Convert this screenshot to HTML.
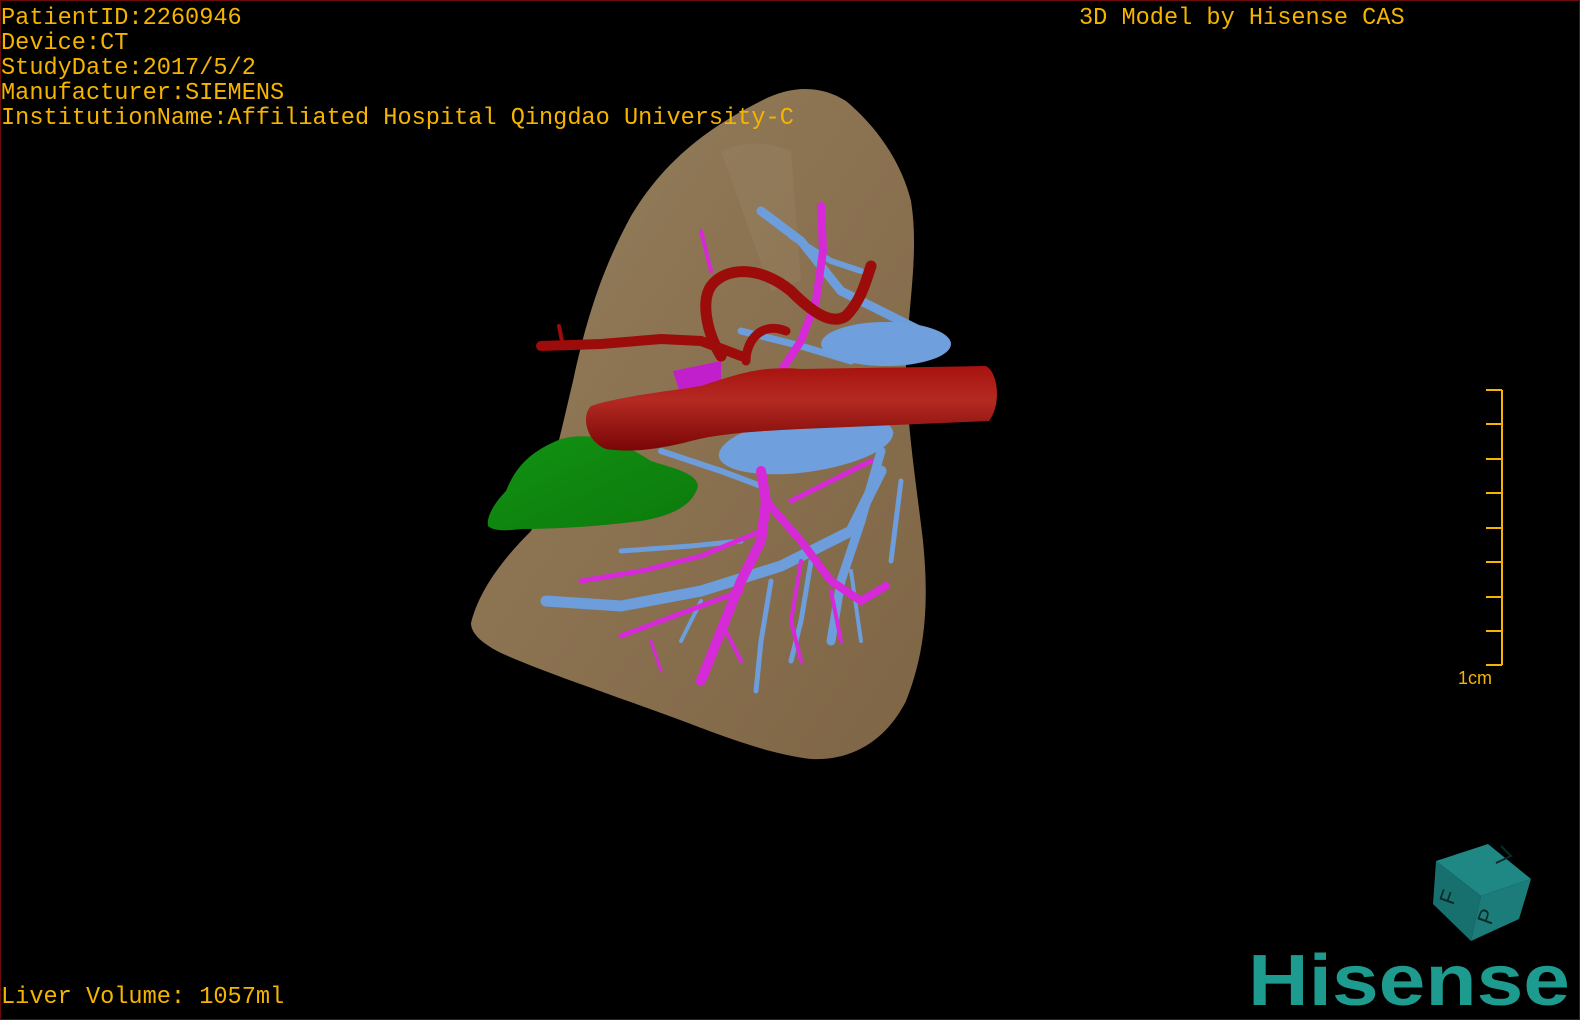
<!DOCTYPE html>
<html><head><meta charset="utf-8"><style>
html,body{margin:0;padding:0;background:#000;}
#c{position:relative;width:1580px;height:1020px;background:#000;overflow:hidden;box-sizing:border-box;border:1px solid #6a0a0a;}
.t{position:absolute;font-family:"Liberation Mono",monospace;font-size:23.6px;color:#f5b400;white-space:pre;line-height:25px;}
</style></head><body><div id="c">
<svg width="1580" height="1020" style="position:absolute;left:0;top:0">
<defs>
<linearGradient id="lv" x1="0" y1="0" x2="1" y2="1">
<stop offset="0" stop-color="#95805e"/><stop offset="0.5" stop-color="#8a7150"/><stop offset="1" stop-color="#7e6545"/>
</linearGradient>
<linearGradient id="rd" x1="0" y1="0" x2="0" y2="1">
<stop offset="0" stop-color="#a8120e"/><stop offset="0.4" stop-color="#b42a22"/><stop offset="1" stop-color="#7a0606"/>
</linearGradient>
<linearGradient id="gr" x1="0" y1="0" x2="1" y2="1">
<stop offset="0" stop-color="#129212"/><stop offset="1" stop-color="#0c7a0c"/>
</linearGradient>
</defs>
<path d="M470,622 C478,590 500,560 530,530 C550,480 560,430 572,380 C585,320 600,270 630,215 C660,165 700,130 760,100 C790,84 820,84 845,100 C875,125 900,160 910,200 C918,250 908,300 905,360 C905,420 915,480 922,540 C928,600 925,650 905,700 C885,740 850,760 810,758 C760,752 710,730 660,712 C600,690 540,670 500,652 C482,643 470,633 470,622 Z" fill="url(#lv)"/>
<path d="M720,150 C745,140 765,140 790,150 L800,280 L770,290 Z" fill="#a08d6c" opacity="0.25"/>
<g stroke="#6d9ddb" fill="none" stroke-linecap="round">
<path d="M760,210 L800,240 L840,290 L880,310 L930,335" stroke-width="9"/>
<path d="M790,235 L830,260 L860,270" stroke-width="6"/>
<path d="M740,330 L800,345 L850,360" stroke-width="7"/>
<path d="M545,600 L620,605 L700,590 L780,565 L850,530 L880,470" stroke-width="11"/>
<path d="M620,550 L690,545 L740,540" stroke-width="5"/>
<path d="M660,450 L720,470 L760,485" stroke-width="6"/>
<path d="M880,450 L860,520 L840,580 L830,640" stroke-width="9"/>
<path d="M900,480 L890,560" stroke-width="5"/>
<path d="M770,580 L760,640 L755,690" stroke-width="5"/>
<path d="M810,560 L800,620 L790,660" stroke-width="5"/>
<path d="M850,570 L860,640" stroke-width="4"/>
<path d="M700,600 L680,640" stroke-width="4"/>
</g>
<ellipse cx="885" cy="343" rx="65" ry="22" fill="#6f9fdc"/>
<ellipse cx="805" cy="443" rx="88" ry="28" fill="#6f9fdc" transform="rotate(-8 805 443)"/>
<g stroke="#d62ad8" fill="none" stroke-linecap="round">
<path d="M820,205 L822,250 L815,300 L800,340 L780,370" stroke-width="8"/>
<path d="M700,230 L710,270" stroke-width="4"/>
<path d="M760,470 L765,500 L760,540 L740,580 L720,630 L700,680" stroke-width="10"/>
<path d="M765,500 L800,540 L830,580 L860,600 L885,585" stroke-width="8"/>
<path d="M760,530 L700,555 L640,570 L580,580" stroke-width="5"/>
<path d="M790,500 L850,470 L870,460" stroke-width="5"/>
<path d="M740,590 L660,620 L620,635" stroke-width="5"/>
<path d="M800,560 L790,620 L800,660" stroke-width="4"/>
<path d="M830,590 L840,640" stroke-width="4"/>
<path d="M720,620 L740,660" stroke-width="4"/>
<path d="M650,640 L660,670" stroke-width="3"/>
</g>
<path d="M672,370 L720,360 L720,395 L680,395 Z" fill="#c21fcc"/>
<path d="M487,525 C485,515 495,500 505,490 C515,465 530,450 560,438 C590,430 620,440 650,460 C675,468 695,472 697,485 C692,505 670,515 640,520 C600,525 560,528 520,528 C505,530 492,530 487,525 Z" fill="url(#gr)"/>
<g stroke="#9c0c0a" fill="none" stroke-linecap="round">
<path d="M540,345 L600,343 L660,338 L700,340 L740,355" stroke-width="10"/>
<path d="M558,325 L562,345" stroke-width="4"/>
<path d="M720,355 C705,330 700,300 710,285 C725,265 760,265 790,290 C810,310 830,325 845,315 C860,300 865,280 870,265" stroke-width="11"/>
<path d="M745,360 C745,340 760,320 785,330" stroke-width="9"/>
</g>
<path d="M590,405 C620,395 670,390 700,385 C740,372 760,365 800,368 L985,365 C998,372 1000,405 988,420 L800,428 C760,430 720,432 690,440 C660,448 630,452 605,448 C585,440 580,415 590,405 Z" fill="url(#rd)"/>
<g stroke="#f5b400" stroke-width="2" fill="none">
<path d="M1501,389 V664"/>
<path d="M1485,389H1501M1485,423H1501M1485,458H1501M1485,492H1501M1485,527H1501M1485,561H1501M1485,596H1501M1485,630H1501M1485,664H1501"/>
</g>
<text x="1457" y="683" font-family="Liberation Sans,sans-serif" font-size="18" fill="#f5b400">1cm</text>
<polygon points="1435,860 1487,843 1530,878 1480,895" fill="#1f8784"/>
<polygon points="1435,860 1480,895 1470,940 1432,903" fill="#17706e"/>
<polygon points="1480,895 1530,878 1518,918 1470,940" fill="#1b7c79"/>
<text x="1452" y="905" font-family="Liberation Sans,sans-serif" font-size="22" fill="#0a2a2a" transform="rotate(-70 1452 905)">F</text>
<text x="1490" y="925" font-family="Liberation Sans,sans-serif" font-size="22" fill="#0a2a2a" transform="rotate(-70 1490 925)">P</text>
<path d="M1495,862 L1510,855 L1500,845" stroke="#0a2a2a" stroke-width="2" fill="none"/>
<text x="1247" y="1004" font-family="Liberation Sans,sans-serif" font-weight="bold" font-size="72" fill="#1e9b8f" textLength="322" lengthAdjust="spacingAndGlyphs">Hisense</text>
</svg>
<div class="t" style="left:0;top:5px">PatientID:2260946
Device:CT
StudyDate:2017/5/2
Manufacturer:SIEMENS
InstitutionName:Affiliated Hospital Qingdao University-C</div>
<div class="t" style="left:1078px;top:5px">3D Model by Hisense CAS</div>
<div class="t" style="left:0;top:984px">Liver Volume: 1057ml</div>
</div></body></html>
